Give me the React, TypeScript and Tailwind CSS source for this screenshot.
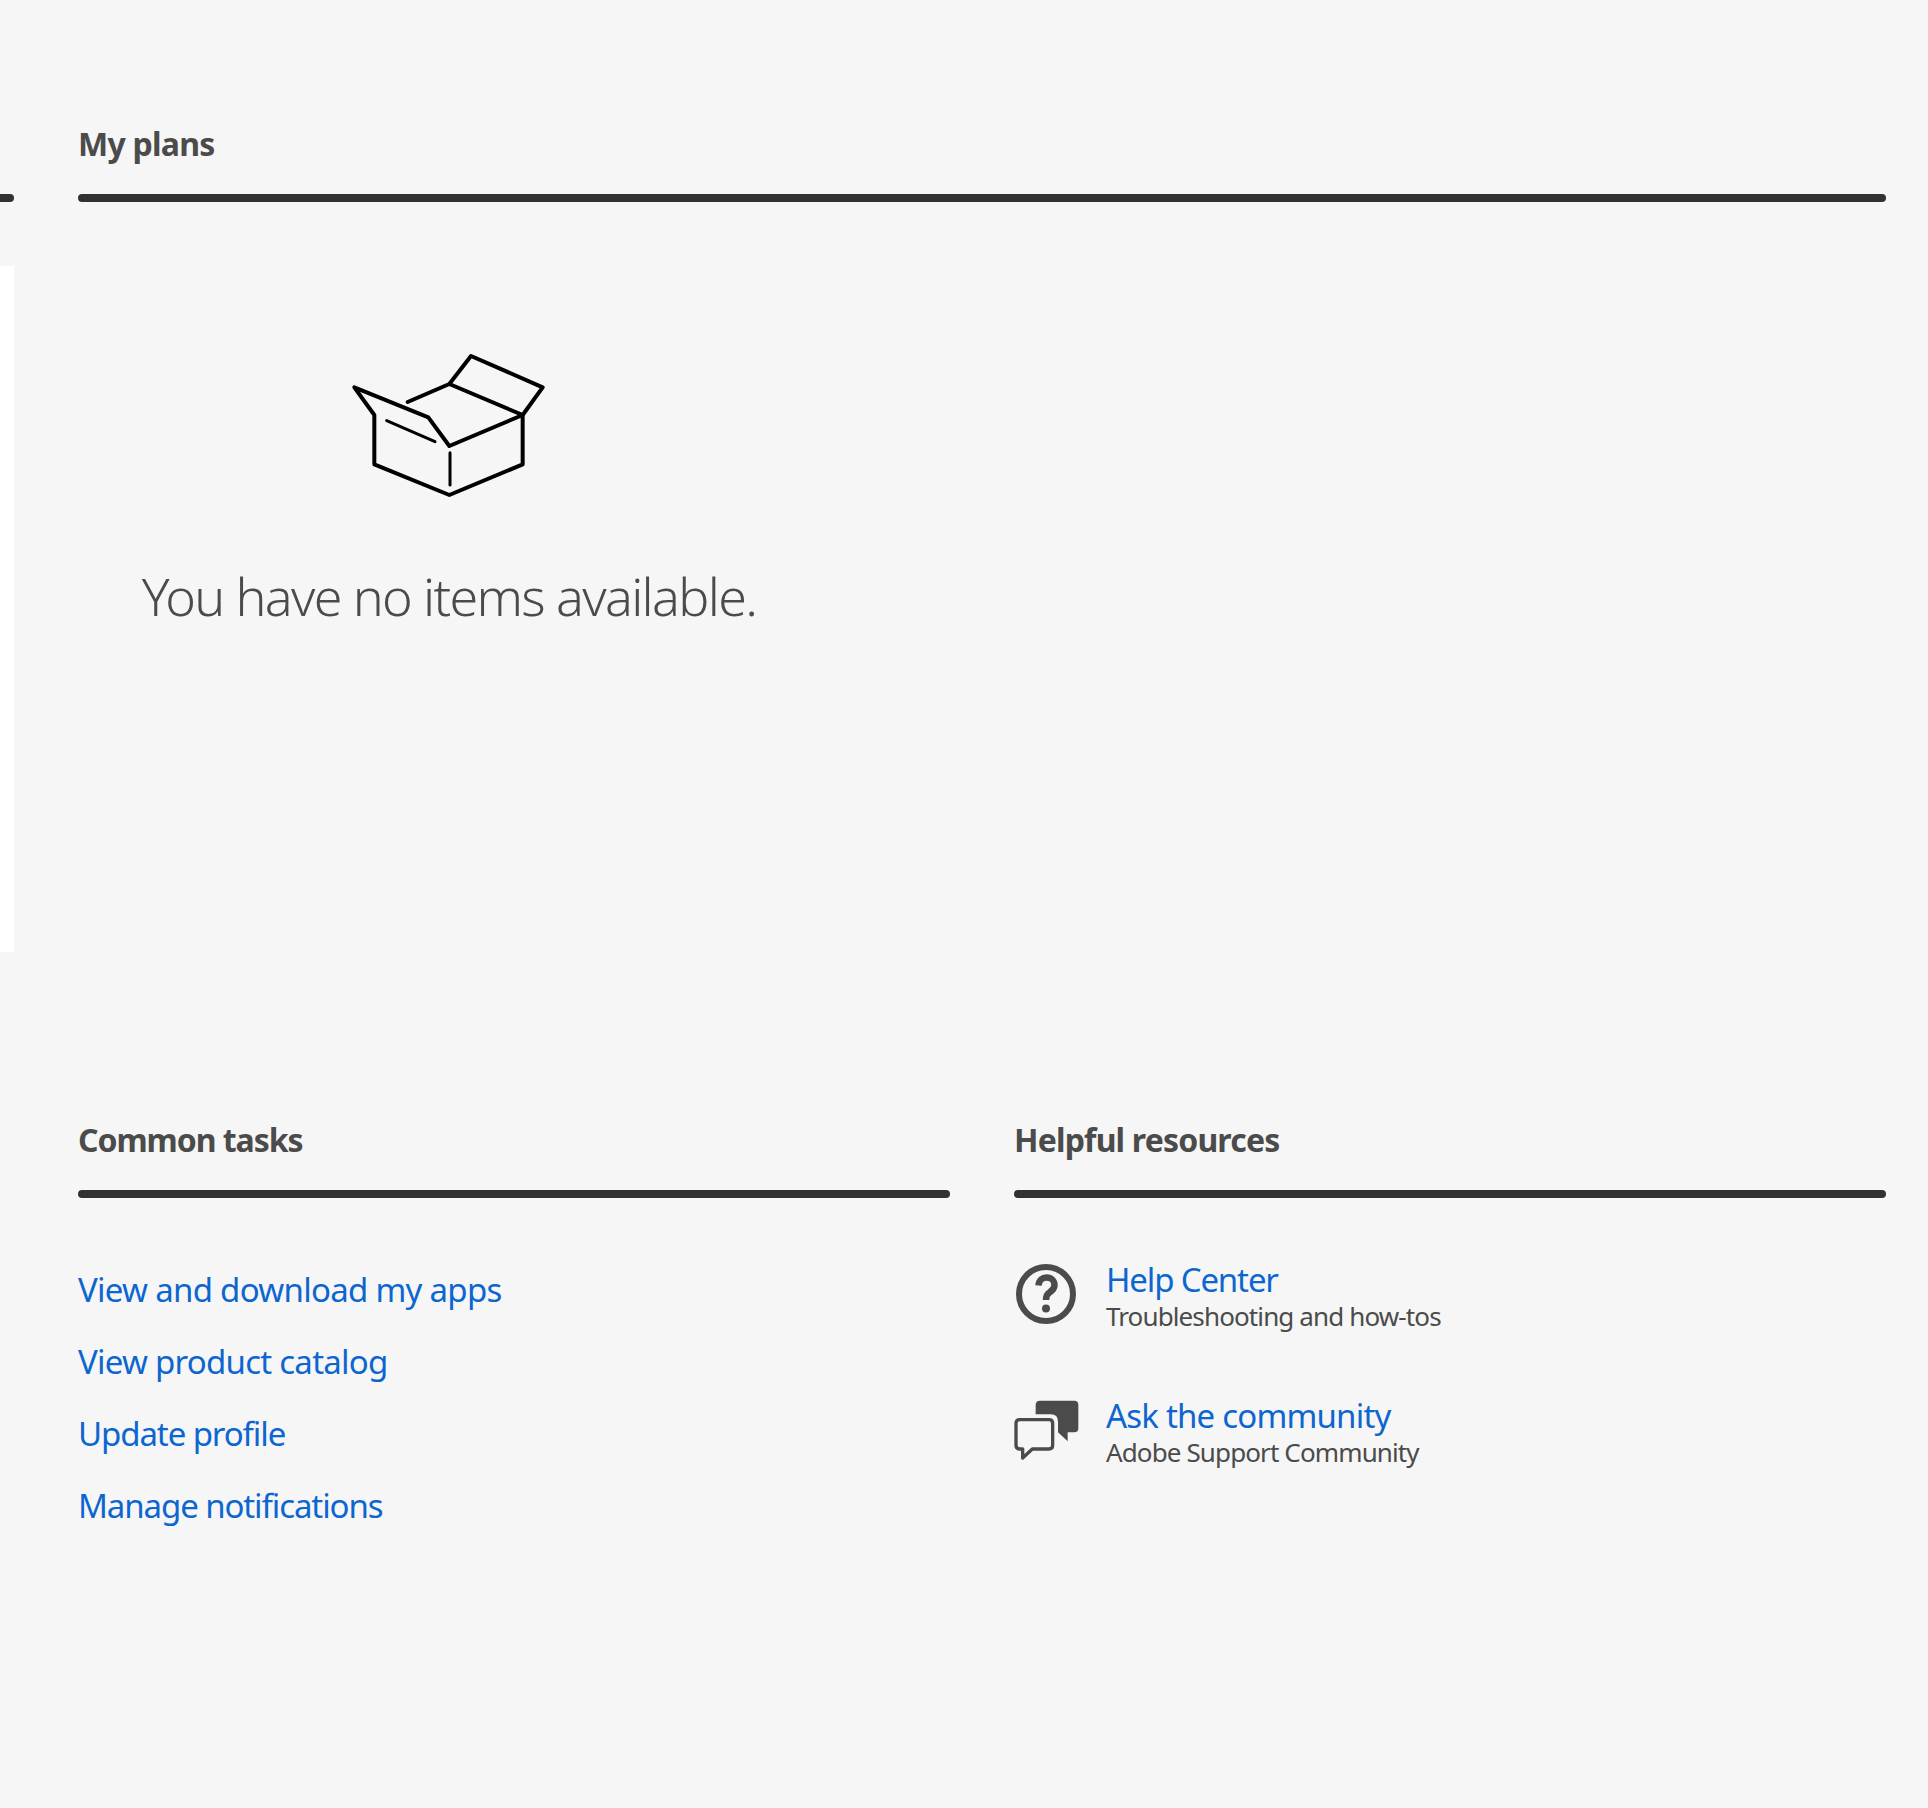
const font = "font-['Noto_Sans','Liberation_Sans',sans-serif]";

function Rule() {
  return <div className="h-[8px] w-full rounded-[4px] bg-[#323232]" />;
}

function BoxIcon() {
  return (
    <svg className="ml-[-6px]" width="250" height="190" viewBox="0 0 750 570" fill="none" stroke="#000" strokeWidth="12" strokeLinecap="round" strokeLinejoin="round">
      <path d="M100 172L160 255V403L385 495L605 403V255L385 348L322 262L100 172Z" />
      <path d="M260 216L385 162L605 255L665 172L450 78L385 162" />
      <path d="M197 272L342 335" strokeWidth="9" />
      <path d="M387 368V465" strokeWidth="9" />
    </svg>
  );
}

function HelpIcon() {
  return (
    <svg className="mb-[6px] shrink-0" width="64" height="64" viewBox="0 0 64 64" fill="none">
      <circle cx="32" cy="32" r="27" stroke="#4b4b4b" strokeWidth="6" />
      <path d="M24.5 23.5C25 18 28.5 15.5 32.5 15.5C37.5 15.5 40.5 19 40.5 23C40.5 27 37.8 29 35.5 30.5C33 32 32 33.5 32 38" stroke="#4b4b4b" strokeWidth="6.5" />
      <circle cx="32" cy="46.5" r="4" fill="#4b4b4b" />
    </svg>
  );
}

function ChatIcon() {
  return (
    <svg className="mb-[7px] shrink-0" width="66" height="62" viewBox="40 480 198 186" fill="none">
      <path d="M118 485H221Q233 485 233 497V568Q233 580 221 580H201V607L172 580V548Q172 526 150 526H105V498Q105 485 118 485Z" fill="#4b4b4b" />
      <path d="M57 542H145Q156 542 156 553V619Q156 630 145 630H95L66 657V630H57Q46 630 46 619V553Q46 542 57 542Z" stroke="#4b4b4b" strokeWidth="10" strokeLinejoin="round" />
    </svg>
  );
}

function Resource({ icon, title, sub, tracking }: { icon: React.ReactNode; title: string; sub: string; tracking: string }) {
  return (
    <div className="flex items-center gap-[28px]">
      <div className="flex w-[64px] shrink-0 items-center">{icon}</div>
      <div>
        <a className={`block text-[33px] leading-[38px] text-[#0d66d0] ${tracking}`}>{title}</a>
        <div className="text-[26px] leading-[34px] tracking-[-0.88px] text-[#4b4b4b]">{sub}</div>
      </div>
    </div>
  );
}

function Heading({ children, tracking }: { children: React.ReactNode; tracking: string }) {
  return <h2 className={`h-[74px] text-[32px] font-bold leading-[48px] text-[#4b4b4b] ${tracking}`}>{children}</h2>;
}

export default function App() {
  return (
    <div className={`${font} flex min-h-[1808px] gap-[64px] bg-[#f6f6f6] pr-[42px]`}>
      <div className="w-[14px] shrink-0 pt-[194px]">
        <div className="h-[8px] rounded-r-[4px] bg-[#323232]" />
        <div className="mt-[64px] h-[686px] bg-white" />
      </div>
      <div className="min-w-0 flex-1 pt-[120px]">
        <Heading tracking="tracking-[-0.75px]">My plans</Heading>
        <Rule />
        <div className="flex h-[914px] w-[742px] flex-col items-center pt-[128px]">
          <BoxIcon />
          <p className="mt-[41px] text-[52px] font-light leading-[70px] tracking-[-1.65px] text-[#4b4b4b]">You have no items available.</p>
        </div>
        <div className="grid grid-cols-2 gap-[64px]">
          <section>
            <Heading tracking="tracking-[-1.05px]">Common tasks</Heading>
            <Rule />
            <div className="mt-[68px] flex flex-col gap-[24px] text-[33px] leading-[48px] text-[#0d66d0]">
              <a className="tracking-[-0.72px]">View and download my apps</a>
              <a className="tracking-[-0.75px]">View product catalog</a>
              <a className="tracking-[-1.1px]">Update profile</a>
              <a className="tracking-[-1.1px]">Manage notifications</a>
            </div>
          </section>
          <section>
            <Heading tracking="tracking-[-0.82px]">Helpful resources</Heading>
            <Rule />
            <div className="mt-[63px] flex flex-col gap-[64px]">
              <Resource icon={<HelpIcon />} title="Help Center" sub="Troubleshooting and how-tos" tracking="tracking-[-1.15px]" />
              <Resource icon={<ChatIcon />} title="Ask the community" sub="Adobe Support Community" tracking="tracking-[-0.8px]" />
            </div>
          </section>
        </div>
      </div>
    </div>
  );
}
